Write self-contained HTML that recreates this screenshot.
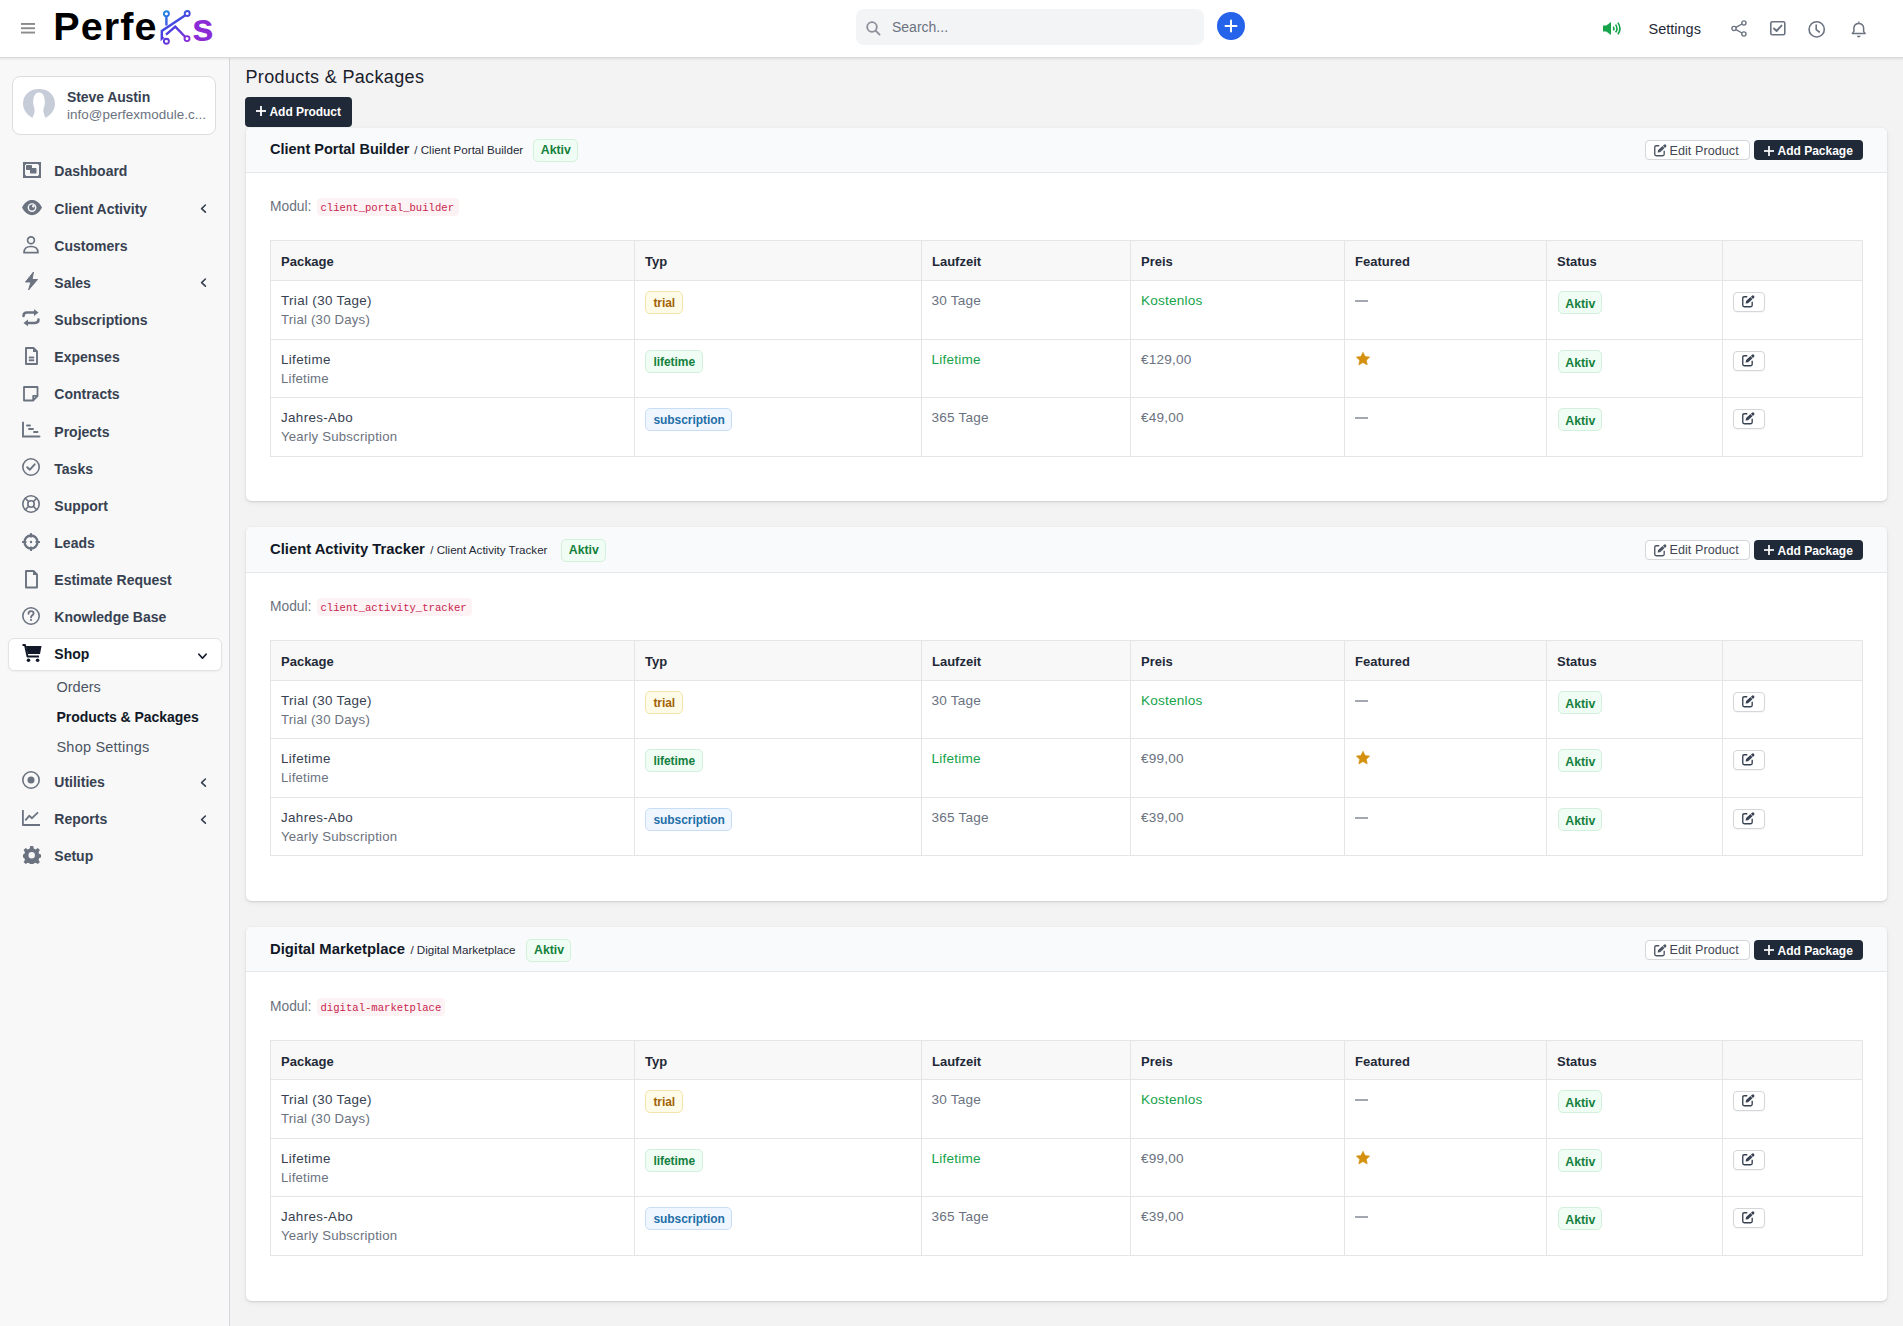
<!DOCTYPE html>
<html><head><meta charset="utf-8"><style>
*{box-sizing:border-box;margin:0;padding:0}
html,body{width:1903px;height:1326px;overflow:hidden}
body{font-family:"Liberation Sans",sans-serif;background:#f3f3f3;color:#374151;position:relative}
.abs{position:absolute}
.t{position:absolute;white-space:nowrap;line-height:1}
#hdr{position:absolute;left:0;top:0;width:1903px;height:58px;background:#fff;border-bottom:1px solid #dadada;z-index:5}
#hdrsh{position:absolute;left:0;top:58px;width:1903px;height:3px;background:linear-gradient(rgba(0,0,0,.07),rgba(0,0,0,0));z-index:4}
#side{position:absolute;left:0;top:58px;width:230px;height:1268px;background:#f8f8f8;border-right:1px solid #d6d6dc;z-index:3}
.card{position:absolute;left:246px;width:1641px;height:373.6px;background:#fff;border-radius:5px;box-shadow:0 1px 2px rgba(0,0,0,.11),0 2px 6px rgba(0,0,0,.05),0 0 1px rgba(0,0,0,.10)}
.ch{position:absolute;left:0;top:0;width:1641px;height:45.5px;background:#f9fafb;border-bottom:1px solid #e5e7eb;border-radius:5px 5px 0 0}
.badge{position:absolute;height:23px;border-radius:5px;border:1px solid}
.b-green{background:#f0fdf4;border-color:#d3f0dc}
.b-amber{background:#fefce8;border-color:#f3e4ad}
.b-blue{background:#eff6ff;border-color:#c9def5}
.hl{position:absolute;height:1px;background:#e5e5e8}
.vl{position:absolute;width:1px;background:#e5e5e8}
.btn{position:absolute;border-radius:4px}
</style></head><body>
<div id="hdr">
<svg class="abs" style="left:21px;top:22px;overflow:visible" width="14" height="12" viewBox="0 0 14 12" ><g fill="#8a8a8a"><rect x="0" y="1" width="14" height="1.9"/><rect x="0" y="5.3" width="14" height="1.9"/><rect x="0" y="9.6" width="14" height="1.9"/></g></svg>
<div class="t" style="left:53.3px;top:7.06px;font-size:39.5px;font-weight:bold;color:#000;letter-spacing:1.1px;">Perfe</div>
<svg class="abs" style="left:160px;top:10px;overflow:visible" width="32" height="35" viewBox="0 0 32 35" gradientUnits="userSpaceOnUse"><defs><linearGradient id="kg" gradientUnits="userSpaceOnUse" x1="4" y1="2" x2="26" y2="33"><stop offset="0" stop-color="#1e8ae6"/><stop offset=".45" stop-color="#4a3fe0"/><stop offset="1" stop-color="#8a2ad8"/></linearGradient></defs>
<g fill="none" stroke="url(#kg)" stroke-width="2.4" stroke-linecap="butt" stroke-linejoin="miter">
<circle cx="6.4" cy="3.7" r="2.5" stroke-width="1.9"/>
<line x1="6.4" y1="6.3" x2="6.4" y2="15.5"/>
<circle cx="27.2" cy="3.5" r="2.5" stroke-width="1.9"/>
<polyline points="25,5.5 1.8,21 1.8,28.5 3.5,27"/>
<polyline points="6,24.7 15.3,16.7 24.8,26.5"/>
<circle cx="27" cy="28.6" r="2.5" stroke-width="1.9"/>
<circle cx="6.4" cy="31.2" r="2.5" stroke-width="1.9"/>
</g></svg>
<div class="t" style="left:192px;top:7.79px;font-size:39px;font-weight:bold;color:#8b2bd6;letter-spacing:0px;">s</div>
<div class="abs" style="left:856px;top:9px;width:348px;height:36px;background:#f3f4f6;border-radius:8px"></div>
<svg class="abs" style="left:866px;top:21px;overflow:visible" width="15" height="15" viewBox="0 0 15 15" ><g fill="none" stroke="#8a8f98" stroke-width="1.8"><circle cx="6" cy="6" r="4.8"/><line x1="9.6" y1="9.6" x2="13.6" y2="13.6" stroke-linecap="round"/></g></svg>
<div class="t" style="left:892px;top:20.45px;font-size:14px;font-weight:normal;color:#6b7280;letter-spacing:0px;">Search...</div>
<svg class="abs" style="left:1217px;top:11.7px;overflow:visible" width="28" height="28" viewBox="0 0 28 28" ><circle cx="14" cy="14" r="14" fill="#2563eb"/><g stroke="#fff" stroke-width="2" stroke-linecap="round"><line x1="14" y1="8.5" x2="14" y2="19.5"/><line x1="8.5" y1="14" x2="19.5" y2="14"/></g></svg>
<svg class="abs" style="left:1603px;top:22px;overflow:visible" width="19" height="13" viewBox="0 0 19 13" ><path d="M0 3.6 H3.3 L8 0 V13 L3.3 9.4 H0 Z" fill="#16a34a"/><g fill="none" stroke="#16a34a" stroke-width="1.6"><path d="M10.3 4.6 Q11.7 6.5 10.3 8.4"/><path d="M12.6 2.6 Q15.4 6.5 12.6 10.4"/><path d="M14.9 0.6 Q19 6.5 14.9 12.4"/></g></svg>
<div class="t" style="left:1648.5px;top:21.73px;font-size:14.5px;font-weight:normal;color:#1f2937;letter-spacing:0px;">Settings</div>
<svg class="abs" style="left:1731px;top:20px;overflow:visible" width="16" height="17" viewBox="0 0 16 17" ><g fill="none" stroke="#6b7280" stroke-width="1.4"><circle cx="12.9" cy="3" r="2.1"/><circle cx="3" cy="8.5" r="2.1"/><circle cx="12.9" cy="14" r="2.1"/><line x1="4.9" y1="7.4" x2="11" y2="4"/><line x1="4.9" y1="9.6" x2="11" y2="13"/></g></svg>
<svg class="abs" style="left:1770px;top:21px;overflow:visible" width="16" height="15" viewBox="0 0 16 15" ><g fill="none" stroke="#6b7280" stroke-width="1.6"><rect x="0.8" y="0.8" width="14" height="13" rx="1.5"/><polyline points="4,7.5 6.6,10 11.5,4.6" stroke-width="1.9" stroke-linecap="round" stroke-linejoin="round"/></g></svg>
<svg class="abs" style="left:1808px;top:21px;overflow:visible" width="18" height="17" viewBox="0 0 18 17" ><g fill="none" stroke="#6b7280" stroke-width="1.6"><circle cx="8.7" cy="8.4" r="7.6"/><polyline points="8.2,4 8.2,8.7 11.3,11" stroke-linecap="round" stroke-linejoin="round"/></g></svg>
<svg class="abs" style="left:1851px;top:21px;overflow:visible" width="16" height="17" viewBox="0 0 16 17" ><g fill="none" stroke="#6b7280" stroke-width="1.5" stroke-linejoin="round"><path d="M1.3 12.6 H14.2 L12.6 10.4 V6.6 A4.9 4.9 0 0 0 2.9 6.6 V10.4 Z"/><line x1="7.75" y1="0.4" x2="7.75" y2="1.7"/></g><path d="M5.8 14.8 H9.7 Q9.5 16.4 7.75 16.4 Q6 16.4 5.8 14.8Z" fill="#6b7280"/></svg>
</div><div id="hdrsh"></div>
<div id="side">
<div class="abs" style="left:12px;top:18px;width:204px;height:58.5px;background:#fff;border:1px solid #dcdde0;border-radius:8px"></div>
<svg class="abs" style="left:23px;top:31px;overflow:visible" width="32" height="30" viewBox="0 0 32 30" ><path d="M9.5 29 C6 27 0 22 0 15 C0 6 6.5 0 16 0 C25.5 0 32 6 32 15 C32 22 26 27 22.5 29 C21 25 19.5 22 21 18 C22.5 14 22 8 19.5 5 C18 3 14 3 12.5 5 C10 8 9.5 14 11 18 C12.5 22 11 25 9.5 29Z" fill="#c7ccd9"/></svg>
<div class="t" style="left:67px;top:31.95px;font-size:14px;font-weight:bold;color:#374151;letter-spacing:-0.1px;">Steve Austin</div>
<div class="t" style="left:67px;top:50.46px;font-size:13.4px;font-weight:normal;color:#6b7280;letter-spacing:0.05px;">info@perfexmodule.c...</div>
<div class="abs" style="left:8px;top:579.5px;width:214px;height:33px;background:#fff;border:1px solid #e2e3e6;border-radius:6px;box-shadow:0 1px 2px rgba(0,0,0,.05)"></div>
<div class="t" style="left:54.3px;top:106.45px;font-size:14px;font-weight:bold;color:#374151;letter-spacing:0px;">Dashboard</div>
<svg class="abs" style="left:23px;top:104px;overflow:visible" width="18" height="16" viewBox="0 0 18 16" ><g fill="none" stroke="#6b7280" stroke-width="2"><rect x="1" y="1" width="16" height="14"/></g><g fill="#6b7280"><rect x="0" y="0" width="3" height="3" rx=".8"/><rect x="15" y="0" width="3" height="3" rx=".8"/><rect x="0" y="13" width="3" height="3" rx=".8"/><rect x="15" y="13" width="3" height="3" rx=".8"/><rect x="3" y="3" width="6" height="5" rx=".8"/><rect x="7" y="6" width="6.5" height="5.5" rx=".8"/></g></svg>
<div class="t" style="left:54.3px;top:143.60px;font-size:14px;font-weight:bold;color:#374151;letter-spacing:0px;">Client Activity</div>
<svg class="abs" style="left:22px;top:141.5px;overflow:visible" width="20" height="15.2" viewBox="0 0 20 15.2" ><path d="M0 7.6 C3 1.5 7 0 10 0 C13 0 17 1.5 20 7.6 C17 13.7 13 15.2 10 15.2 C7 15.2 3 13.7 0 7.6Z" fill="#6b7280"/><circle cx="10" cy="7.6" r="4.4" fill="#f8f8f8"/><circle cx="10" cy="7.6" r="3" fill="#6b7280"/><circle cx="11.3" cy="6.3" r="1.2" fill="#f8f8f8"/></svg>
<svg class="abs" style="left:200px;top:145.85px;overflow:visible" width="7" height="9" viewBox="0 0 7 9" ><polyline points="5.4,1 1.6,4.6 5.4,8.2" fill="none" stroke="#374151" stroke-width="1.6" stroke-linecap="round" stroke-linejoin="round"/></svg>
<div class="t" style="left:54.3px;top:180.75px;font-size:14px;font-weight:bold;color:#374151;letter-spacing:0px;">Customers</div>
<svg class="abs" style="left:23px;top:177.5px;overflow:visible" width="16" height="17.5" viewBox="0 0 16 17.5" ><g fill="none" stroke="#6b7280" stroke-width="1.7"><circle cx="8" cy="4.3" r="3.4"/><path d="M1 16.7 C1 12.5 4 10.5 8 10.5 C12 10.5 15 12.5 15 16.7 Z" stroke-linejoin="round"/></g></svg>
<div class="t" style="left:54.3px;top:217.90px;font-size:14px;font-weight:bold;color:#374151;letter-spacing:0px;">Sales</div>
<svg class="abs" style="left:24.3px;top:214px;overflow:visible" width="14" height="18" viewBox="0 0 14 18" ><path d="M9.5 0 L1.5 10 H7 L4.5 18 L13.5 7.5 H8 Z" fill="#6b7280" stroke="#6b7280" stroke-width="1" stroke-linejoin="round"/></svg>
<svg class="abs" style="left:200px;top:220.14999999999998px;overflow:visible" width="7" height="9" viewBox="0 0 7 9" ><polyline points="5.4,1 1.6,4.6 5.4,8.2" fill="none" stroke="#374151" stroke-width="1.6" stroke-linecap="round" stroke-linejoin="round"/></svg>
<div class="t" style="left:54.3px;top:255.05px;font-size:14px;font-weight:bold;color:#374151;letter-spacing:0px;">Subscriptions</div>
<svg class="abs" style="left:22px;top:251.3px;overflow:visible" width="18" height="17.5" viewBox="0 0 18 17.5" ><g fill="none" stroke="#6b7280" stroke-width="2.5" stroke-linecap="round"><path d="M1.5 7 C1.5 4.5 3 3.6 5 3.6 H13"/><path d="M16.5 10.5 C16.5 13 15 13.9 13 13.9 H5"/></g><path d="M12 0.3 L16.5 3.6 L12 6.9Z" fill="#6b7280"/><path d="M6 10.6 L1.5 13.9 L6 17.2Z" fill="#6b7280"/></svg>
<div class="t" style="left:54.3px;top:292.20px;font-size:14px;font-weight:bold;color:#374151;letter-spacing:0px;">Expenses</div>
<svg class="abs" style="left:24.3px;top:289px;overflow:visible" width="15" height="18" viewBox="0 0 15 18" ><g fill="none" stroke="#6b7280" stroke-width="1.9"><path d="M2 1 H9.5 L13 4.5 V17 H2 Z" stroke-linejoin="round"/><line x1="4.8" y1="10.5" x2="10.2" y2="10.5"/><line x1="4.8" y1="13.3" x2="10.2" y2="13.3"/></g><path d="M9 0.5 L13.5 5 H9Z" fill="#6b7280"/></svg>
<div class="t" style="left:54.3px;top:329.35px;font-size:14px;font-weight:bold;color:#374151;letter-spacing:0px;">Contracts</div>
<svg class="abs" style="left:23.3px;top:327.5px;overflow:visible" width="15.5" height="15.5" viewBox="0 0 15.5 15.5" ><g fill="none" stroke="#6b7280" stroke-width="1.8" stroke-linejoin="round"><path d="M1 1 H14.5 V10 L10 14.5 H1 Z"/><path d="M14.5 9.8 H10.2 V14.5"/></g></svg>
<div class="t" style="left:54.3px;top:366.50px;font-size:14px;font-weight:bold;color:#374151;letter-spacing:0px;">Projects</div>
<svg class="abs" style="left:22px;top:364.4px;overflow:visible" width="18.5" height="15.5" viewBox="0 0 18.5 15.5" ><g fill="none" stroke="#6b7280" stroke-width="1.9" stroke-linecap="round"><path d="M1 0.5 V14.5 H17.5"/><line x1="5" y1="3.5" x2="8" y2="3.5"/><line x1="7" y1="7" x2="11" y2="7"/><line x1="12" y1="10" x2="15.5" y2="10"/></g></svg>
<div class="t" style="left:54.3px;top:403.65px;font-size:14px;font-weight:bold;color:#374151;letter-spacing:0px;">Tasks</div>
<svg class="abs" style="left:22px;top:400px;overflow:visible" width="18" height="18" viewBox="0 0 18 18" ><g fill="none" stroke="#6b7280" stroke-width="1.6"><circle cx="9" cy="9" r="8.2"/><polyline points="5.2,9.2 7.9,11.7 12.7,6.3" stroke-width="1.9" stroke-linecap="round" stroke-linejoin="round"/></g></svg>
<div class="t" style="left:54.3px;top:440.80px;font-size:14px;font-weight:bold;color:#374151;letter-spacing:0px;">Support</div>
<svg class="abs" style="left:22px;top:436.8px;overflow:visible" width="18" height="18" viewBox="0 0 18 18" ><g fill="none" stroke="#6b7280" stroke-width="1.6"><circle cx="9" cy="9" r="8.2"/><circle cx="9" cy="9" r="3.2"/><line x1="2.9" y1="2.9" x2="6.7" y2="6.7"/><line x1="15.1" y1="2.9" x2="11.3" y2="6.7"/><line x1="2.9" y1="15.1" x2="6.7" y2="11.3"/><line x1="15.1" y1="15.1" x2="11.3" y2="11.3"/></g></svg>
<div class="t" style="left:54.3px;top:477.95px;font-size:14px;font-weight:bold;color:#374151;letter-spacing:0px;">Leads</div>
<svg class="abs" style="left:22px;top:475px;overflow:visible" width="18" height="18" viewBox="0 0 18 18" ><g fill="none" stroke="#6b7280" stroke-width="2.3"><circle cx="9" cy="9" r="6.5"/></g><g fill="#6b7280"><rect x="8" y="0" width="2" height="4.5" rx=".6"/><rect x="8" y="13.5" width="2" height="4.5" rx=".6"/><rect x="0" y="8" width="4.5" height="2" rx=".6"/><rect x="13.5" y="8" width="4.5" height="2" rx=".6"/><circle cx="9" cy="9" r="1.2"/></g></svg>
<div class="t" style="left:54.3px;top:515.10px;font-size:14px;font-weight:bold;color:#374151;letter-spacing:0px;">Estimate Request</div>
<svg class="abs" style="left:24.3px;top:511.70000000000005px;overflow:visible" width="15" height="18.5" viewBox="0 0 15 18.5" ><g fill="none" stroke="#6b7280" stroke-width="1.9" stroke-linejoin="round"><path d="M2 1 H9.5 L13 4.5 V17.5 H2 Z"/></g><path d="M9 0.5 L13.5 5 H9Z" fill="#6b7280"/></svg>
<div class="t" style="left:54.3px;top:552.25px;font-size:14px;font-weight:bold;color:#374151;letter-spacing:0px;">Knowledge Base</div>
<svg class="abs" style="left:22px;top:549.2px;overflow:visible" width="18" height="18" viewBox="0 0 18 18" ><g fill="none" stroke="#6b7280" stroke-width="1.6"><circle cx="9" cy="9" r="8.2"/><path d="M6.5 6.8 C6.5 5 7.6 4.2 9 4.2 C10.5 4.2 11.6 5.1 11.6 6.5 C11.6 8.3 9 8.4 9 10.4" stroke-width="1.8" stroke-linecap="round"/></g><circle cx="9" cy="13" r="1.1" fill="#6b7280"/></svg>
<div class="t" style="left:54.3px;top:589.40px;font-size:14px;font-weight:bold;color:#111827;letter-spacing:0px;">Shop</div>
<svg class="abs" style="left:22px;top:586px;overflow:visible" width="20" height="18.2" viewBox="0 0 20 18.2" ><path d="M0.5 1 H3 L5.5 12.5 H17" fill="none" stroke="#111827" stroke-width="1.9" stroke-linejoin="round"/><path d="M4 2 H19.5 L18 10 H5.7 Z" fill="#111827"/><circle cx="6.5" cy="16.3" r="1.8" fill="#111827"/><circle cx="15.6" cy="16.3" r="1.8" fill="#111827"/></svg>
<svg class="abs" style="left:198px;top:594.5px;overflow:visible" width="9" height="7" viewBox="0 0 9 7" ><polyline points="0.9,1.2 4.5,5.2 8.1,1.2" fill="none" stroke="#111827" stroke-width="1.7" stroke-linecap="round" stroke-linejoin="round"/></svg>
<div class="t" style="left:56.5px;top:621.73px;font-size:14.5px;font-weight:normal;color:#4b5563;letter-spacing:0px;">Orders</div>
<div class="t" style="left:56.5px;top:652.15px;font-size:14px;font-weight:bold;color:#111827;letter-spacing:-0.05px;">Products &amp; Packages</div>
<div class="t" style="left:56.5px;top:681.93px;font-size:14.5px;font-weight:normal;color:#4b5563;letter-spacing:0.2px;">Shop Settings</div>
<div class="t" style="left:54.3px;top:717.45px;font-size:14px;font-weight:bold;color:#374151;letter-spacing:0px;">Utilities</div>
<svg class="abs" style="left:22px;top:713.2px;overflow:visible" width="18" height="18" viewBox="0 0 18 18" ><g fill="none" stroke="#6b7280" stroke-width="1.6"><circle cx="9" cy="9" r="8.2"/></g><circle cx="9" cy="9" r="3.5" fill="#6b7280"/></svg>
<svg class="abs" style="left:200px;top:719.7px;overflow:visible" width="7" height="9" viewBox="0 0 7 9" ><polyline points="5.4,1 1.6,4.6 5.4,8.2" fill="none" stroke="#374151" stroke-width="1.6" stroke-linecap="round" stroke-linejoin="round"/></svg>
<div class="t" style="left:54.3px;top:754.45px;font-size:14px;font-weight:bold;color:#374151;letter-spacing:0px;">Reports</div>
<svg class="abs" style="left:22px;top:752.2px;overflow:visible" width="18" height="16" viewBox="0 0 18 16" ><g fill="none" stroke="#6b7280" stroke-width="1.8" stroke-linejoin="round"><path d="M0.9 0 V15 H18"/><polyline points="3.3,10.3 7.2,5.8 10,8.2 16,2.4" stroke-linecap="butt"/></g></svg>
<svg class="abs" style="left:200px;top:756.7px;overflow:visible" width="7" height="9" viewBox="0 0 7 9" ><polyline points="5.4,1 1.6,4.6 5.4,8.2" fill="none" stroke="#374151" stroke-width="1.6" stroke-linecap="round" stroke-linejoin="round"/></svg>
<div class="t" style="left:54.3px;top:791.45px;font-size:14px;font-weight:bold;color:#374151;letter-spacing:0px;">Setup</div>
<svg class="abs" style="left:22.5px;top:788.3px;overflow:visible" width="18" height="18" viewBox="0 0 18 18" ><path fill="#6b7280" fill-rule="evenodd" d="M7.2 0 H10.2 L10.8 2.6 L12.6 3.4 L14.8 2 L16.9 4.1 L15.5 6.3 L16.3 8.1 L18 8.6 V11.6 L16.3 12 L15.5 13.9 L16.9 16 L14.8 18.1 L12.6 16.7 L10.8 17.5 L10.2 18 H7.2 L6.7 17.5 L4.8 16.7 L2.7 18.1 L0.6 16 L2 13.9 L1.2 12 L0 11.6 V8.6 L1.2 8.1 L2 6.3 L0.6 4.1 L2.7 2 L4.8 3.4 L6.7 2.6 Z M8.7 6 A3.2 3.2 0 1 0 8.7 12.4 A3.2 3.2 0 1 0 8.7 6Z"/></svg>
</div>
<div class="t" style="left:245.5px;top:67.76px;font-size:18px;font-weight:normal;color:#1a202c;letter-spacing:0.35px;">Products &amp; Packages</div>
<div class="btn" style="left:245px;top:97px;width:107px;height:30px;background:#1f2937"></div>
<svg class="abs" style="left:256px;top:105.5px;overflow:visible" width="10" height="10" viewBox="0 0 10 10" ><g stroke="#fff" stroke-width="1.8"><line x1="5" y1="0" x2="5" y2="10"/><line x1="0" y1="5" x2="10" y2="5"/></g></svg>
<div class="t" style="left:269.5px;top:106.14px;font-size:12px;font-weight:bold;color:#fff;letter-spacing:-0.05px;">Add Product</div>
<div class="card" style="top:127.5px;height:373.8px"><div class="ch" style="height:45.50px"></div></div>
<div class="t" style="left:270px;top:141.93px;font-size:14.5px;font-weight:bold;color:#111827;letter-spacing:0px;">Client Portal Builder</div>
<div class="t" style="left:414.3px;top:144.48px;font-size:11.6px;font-weight:normal;color:#1f2937;letter-spacing:0px;">/ Client Portal Builder</div>
<div class="badge b-green" style="left:533.0px;top:138.60px;width:45px"></div>
<div class="t" style="left:540.8px;top:143.89px;font-size:12.3px;font-weight:bold;color:#15803d;letter-spacing:0px;">Aktiv</div>
<div class="btn" style="left:1644.5px;top:140.30px;width:105.5px;height:19.5px;background:#fff;border:1px solid #d4d6da"></div>
<svg class="abs" style="left:1653.6px;top:144.1px;overflow:visible" width="12.5" height="12.5" viewBox="0 0 13 13" ><path d="M5.5 1.8 H2.3 Q0.8 1.8 0.8 3.3 V10.7 Q0.8 12.2 2.3 12.2 H9.1 Q10.6 12.2 10.6 10.7 V6.9" fill="none" stroke="#4b5563" stroke-width="1.4"/><path d="M3.7 8.8 L4.31 6.18 L8.80 2.19 L10.86 4.51 L6.37 8.50 Z" fill="#4b5563"/><path d="M9.32 1.73 L11.38 4.05 L12.42 3.12 A1.55 1.55 0 0 0 10.36 0.80 Z" fill="#4b5563"/></svg>
<div class="t" style="left:1669.5px;top:144.53px;font-size:12.6px;font-weight:normal;color:#3f4652;letter-spacing:0.05px;">Edit Product</div>
<div class="btn" style="left:1754px;top:140.00px;width:109px;height:20px;background:#1f2937"></div>
<svg class="abs" style="left:1763.5px;top:145.5px;overflow:visible" width="10" height="10" viewBox="0 0 10 10" ><g stroke="#fff" stroke-width="1.7"><line x1="5" y1="0" x2="5" y2="10"/><line x1="0" y1="5" x2="10" y2="5"/></g></svg>
<div class="t" style="left:1777.5px;top:145.04px;font-size:12px;font-weight:bold;color:#fff;letter-spacing:0px;">Add Package</div>
<div class="t" style="left:270px;top:200.42px;font-size:13.8px;font-weight:normal;color:#6b7280;letter-spacing:0px;">Modul:</div>
<div class="abs" style="left:316.5px;top:198.10px;width:142.1px;height:17.6px;background:#fdf2f4;border-radius:4px"></div>
<div class="t" style="left:320.5px;top:202.78px;font-size:10.6px;font-weight:normal;color:#c7254e;letter-spacing:0px;font-family:'Liberation Mono',monospace;">client_portal_builder</div>
<div class="abs" style="left:270px;top:240px;width:1592px;height:40px;background:#f8f8f9"></div>
<div class="hl" style="left:270px;top:240px;width:1593px"></div>
<div class="hl" style="left:270px;top:280px;width:1593px"></div>
<div class="hl" style="left:270px;top:339px;width:1593px"></div>
<div class="hl" style="left:270px;top:397px;width:1593px"></div>
<div class="hl" style="left:270px;top:456px;width:1593px"></div>
<div class="vl" style="left:270px;top:240px;height:217px"></div>
<div class="vl" style="left:634px;top:240px;height:217px"></div>
<div class="vl" style="left:921px;top:240px;height:217px"></div>
<div class="vl" style="left:1130px;top:240px;height:217px"></div>
<div class="vl" style="left:1344px;top:240px;height:217px"></div>
<div class="vl" style="left:1546px;top:240px;height:217px"></div>
<div class="vl" style="left:1722px;top:240px;height:217px"></div>
<div class="vl" style="left:1862px;top:240px;height:217px"></div>
<div class="t" style="left:281px;top:254.80px;font-size:13px;font-weight:bold;color:#1f2937;letter-spacing:0px;">Package</div>
<div class="t" style="left:645px;top:254.80px;font-size:13px;font-weight:bold;color:#1f2937;letter-spacing:0px;">Typ</div>
<div class="t" style="left:932px;top:254.80px;font-size:13px;font-weight:bold;color:#1f2937;letter-spacing:0px;">Laufzeit</div>
<div class="t" style="left:1141px;top:254.80px;font-size:13px;font-weight:bold;color:#1f2937;letter-spacing:0px;">Preis</div>
<div class="t" style="left:1355px;top:254.80px;font-size:13px;font-weight:bold;color:#1f2937;letter-spacing:0px;">Featured</div>
<div class="t" style="left:1557px;top:254.80px;font-size:13px;font-weight:bold;color:#1f2937;letter-spacing:0px;">Status</div>
<div class="t" style="left:281px;top:294.16px;font-size:13.4px;font-weight:normal;color:#374151;letter-spacing:0.35px;">Trial (30 Tage)</div>
<div class="t" style="left:281px;top:313.23px;font-size:13.2px;font-weight:normal;color:#6b7280;letter-spacing:0.2px;">Trial (30 Days)</div>
<div class="badge b-amber" style="left:645px;top:291px;width:37.7px"></div>
<div class="t" style="left:653.4px;top:296.64px;font-size:12px;font-weight:bold;color:#a16207;letter-spacing:-0.05px;">trial</div>
<div class="t" style="left:931.5px;top:293.99px;font-size:13.6px;font-weight:normal;color:#6b7280;letter-spacing:0.2px;">30 Tage</div>
<div class="t" style="left:1141px;top:293.99px;font-size:13.6px;font-weight:normal;color:#16a34a;letter-spacing:0.2px;">Kostenlos</div>
<div class="abs" style="left:1355px;top:300px;width:13px;height:2px;background:#a3a8b0"></div>
<div class="badge b-green" style="left:1557.5px;top:291px;width:44.5px"></div>
<div class="t" style="left:1565.3px;top:297.59px;font-size:12.3px;font-weight:bold;color:#15803d;letter-spacing:0px;">Aktiv</div>
<div class="btn" style="left:1733px;top:292px;width:31.5px;height:20px;background:#fff;border:1px solid #d4d6da;box-shadow:0 1px 1px rgba(0,0,0,.04)"></div>
<svg class="abs" style="left:1742.2px;top:295.2px;overflow:visible" width="12.5" height="12.5" viewBox="0 0 13 13" ><path d="M5.5 1.8 H2.3 Q0.8 1.8 0.8 3.3 V10.7 Q0.8 12.2 2.3 12.2 H9.1 Q10.6 12.2 10.6 10.7 V6.9" fill="none" stroke="#374151" stroke-width="1.4"/><path d="M3.7 8.8 L4.31 6.18 L8.80 2.19 L10.86 4.51 L6.37 8.50 Z" fill="#374151"/><path d="M9.32 1.73 L11.38 4.05 L12.42 3.12 A1.55 1.55 0 0 0 10.36 0.80 Z" fill="#374151"/></svg>
<div class="t" style="left:281px;top:353.16px;font-size:13.4px;font-weight:normal;color:#374151;letter-spacing:0.35px;">Lifetime</div>
<div class="t" style="left:281px;top:372.23px;font-size:13.2px;font-weight:normal;color:#6b7280;letter-spacing:0.2px;">Lifetime</div>
<div class="badge b-green" style="left:645px;top:350px;width:57.5px"></div>
<div class="t" style="left:653.4px;top:355.64px;font-size:12px;font-weight:bold;color:#15803d;letter-spacing:-0.05px;">lifetime</div>
<div class="t" style="left:931.5px;top:352.99px;font-size:13.6px;font-weight:normal;color:#16a34a;letter-spacing:0.2px;">Lifetime</div>
<div class="t" style="left:1141px;top:352.99px;font-size:13.6px;font-weight:normal;color:#6b7280;letter-spacing:0.2px;">€129,00</div>
<svg class="abs" style="left:1355.5px;top:351.8px;overflow:visible" width="14" height="14" viewBox="0 0 14 14" ><path d="M7 0.3 L9.1 4.6 L13.7 5.1 L10.3 8.3 L11.2 12.9 L7 10.6 L2.8 12.9 L3.7 8.3 L0.3 5.1 L4.9 4.6 Z" fill="#d4900e" stroke="#d4900e" stroke-width=".6" stroke-linejoin="round"/></svg>
<div class="badge b-green" style="left:1557.5px;top:350px;width:44.5px"></div>
<div class="t" style="left:1565.3px;top:356.59px;font-size:12.3px;font-weight:bold;color:#15803d;letter-spacing:0px;">Aktiv</div>
<div class="btn" style="left:1733px;top:351px;width:31.5px;height:20px;background:#fff;border:1px solid #d4d6da;box-shadow:0 1px 1px rgba(0,0,0,.04)"></div>
<svg class="abs" style="left:1742.2px;top:354.2px;overflow:visible" width="12.5" height="12.5" viewBox="0 0 13 13" ><path d="M5.5 1.8 H2.3 Q0.8 1.8 0.8 3.3 V10.7 Q0.8 12.2 2.3 12.2 H9.1 Q10.6 12.2 10.6 10.7 V6.9" fill="none" stroke="#374151" stroke-width="1.4"/><path d="M3.7 8.8 L4.31 6.18 L8.80 2.19 L10.86 4.51 L6.37 8.50 Z" fill="#374151"/><path d="M9.32 1.73 L11.38 4.05 L12.42 3.12 A1.55 1.55 0 0 0 10.36 0.80 Z" fill="#374151"/></svg>
<div class="t" style="left:281px;top:411.16px;font-size:13.4px;font-weight:normal;color:#374151;letter-spacing:0.35px;">Jahres-Abo</div>
<div class="t" style="left:281px;top:430.23px;font-size:13.2px;font-weight:normal;color:#6b7280;letter-spacing:0.2px;">Yearly Subscription</div>
<div class="badge b-blue" style="left:645px;top:408px;width:86.5px"></div>
<div class="t" style="left:653.4px;top:413.64px;font-size:12px;font-weight:bold;color:#1f6fa8;letter-spacing:-0.05px;">subscription</div>
<div class="t" style="left:931.5px;top:410.99px;font-size:13.6px;font-weight:normal;color:#6b7280;letter-spacing:0.2px;">365 Tage</div>
<div class="t" style="left:1141px;top:410.99px;font-size:13.6px;font-weight:normal;color:#6b7280;letter-spacing:0.2px;">€49,00</div>
<div class="abs" style="left:1355px;top:417px;width:13px;height:2px;background:#a3a8b0"></div>
<div class="badge b-green" style="left:1557.5px;top:408px;width:44.5px"></div>
<div class="t" style="left:1565.3px;top:414.59px;font-size:12.3px;font-weight:bold;color:#15803d;letter-spacing:0px;">Aktiv</div>
<div class="btn" style="left:1733px;top:409px;width:31.5px;height:20px;background:#fff;border:1px solid #d4d6da;box-shadow:0 1px 1px rgba(0,0,0,.04)"></div>
<svg class="abs" style="left:1742.2px;top:412.2px;overflow:visible" width="12.5" height="12.5" viewBox="0 0 13 13" ><path d="M5.5 1.8 H2.3 Q0.8 1.8 0.8 3.3 V10.7 Q0.8 12.2 2.3 12.2 H9.1 Q10.6 12.2 10.6 10.7 V6.9" fill="none" stroke="#374151" stroke-width="1.4"/><path d="M3.7 8.8 L4.31 6.18 L8.80 2.19 L10.86 4.51 L6.37 8.50 Z" fill="#374151"/><path d="M9.32 1.73 L11.38 4.05 L12.42 3.12 A1.55 1.55 0 0 0 10.36 0.80 Z" fill="#374151"/></svg>
<div class="card" style="top:527.4px;height:373.2px"><div class="ch" style="height:45.60px"></div></div>
<div class="t" style="left:270px;top:541.57px;font-size:14.8px;font-weight:bold;color:#111827;letter-spacing:0px;">Client Activity Tracker</div>
<div class="t" style="left:430.2px;top:544.38px;font-size:11.6px;font-weight:normal;color:#1f2937;letter-spacing:0px;">/ Client Activity Tracker</div>
<div class="badge b-green" style="left:561.0px;top:538.50px;width:45px"></div>
<div class="t" style="left:568.8px;top:543.79px;font-size:12.3px;font-weight:bold;color:#15803d;letter-spacing:0px;">Aktiv</div>
<div class="btn" style="left:1644.5px;top:540.20px;width:105.5px;height:19.5px;background:#fff;border:1px solid #d4d6da"></div>
<svg class="abs" style="left:1653.6px;top:544.0px;overflow:visible" width="12.5" height="12.5" viewBox="0 0 13 13" ><path d="M5.5 1.8 H2.3 Q0.8 1.8 0.8 3.3 V10.7 Q0.8 12.2 2.3 12.2 H9.1 Q10.6 12.2 10.6 10.7 V6.9" fill="none" stroke="#4b5563" stroke-width="1.4"/><path d="M3.7 8.8 L4.31 6.18 L8.80 2.19 L10.86 4.51 L6.37 8.50 Z" fill="#4b5563"/><path d="M9.32 1.73 L11.38 4.05 L12.42 3.12 A1.55 1.55 0 0 0 10.36 0.80 Z" fill="#4b5563"/></svg>
<div class="t" style="left:1669.5px;top:544.43px;font-size:12.6px;font-weight:normal;color:#3f4652;letter-spacing:0.05px;">Edit Product</div>
<div class="btn" style="left:1754px;top:539.90px;width:109px;height:20px;background:#1f2937"></div>
<svg class="abs" style="left:1763.5px;top:545.4px;overflow:visible" width="10" height="10" viewBox="0 0 10 10" ><g stroke="#fff" stroke-width="1.7"><line x1="5" y1="0" x2="5" y2="10"/><line x1="0" y1="5" x2="10" y2="5"/></g></svg>
<div class="t" style="left:1777.5px;top:544.94px;font-size:12px;font-weight:bold;color:#fff;letter-spacing:0px;">Add Package</div>
<div class="t" style="left:270px;top:600.32px;font-size:13.8px;font-weight:normal;color:#6b7280;letter-spacing:0px;">Modul:</div>
<div class="abs" style="left:316.5px;top:598.00px;width:155.2px;height:17.6px;background:#fdf2f4;border-radius:4px"></div>
<div class="t" style="left:320.5px;top:602.68px;font-size:10.6px;font-weight:normal;color:#c7254e;letter-spacing:0px;font-family:'Liberation Mono',monospace;">client_activity_tracker</div>
<div class="abs" style="left:270px;top:640px;width:1592px;height:40px;background:#f8f8f9"></div>
<div class="hl" style="left:270px;top:640px;width:1593px"></div>
<div class="hl" style="left:270px;top:680px;width:1593px"></div>
<div class="hl" style="left:270px;top:738px;width:1593px"></div>
<div class="hl" style="left:270px;top:797px;width:1593px"></div>
<div class="hl" style="left:270px;top:855px;width:1593px"></div>
<div class="vl" style="left:270px;top:640px;height:216px"></div>
<div class="vl" style="left:634px;top:640px;height:216px"></div>
<div class="vl" style="left:921px;top:640px;height:216px"></div>
<div class="vl" style="left:1130px;top:640px;height:216px"></div>
<div class="vl" style="left:1344px;top:640px;height:216px"></div>
<div class="vl" style="left:1546px;top:640px;height:216px"></div>
<div class="vl" style="left:1722px;top:640px;height:216px"></div>
<div class="vl" style="left:1862px;top:640px;height:216px"></div>
<div class="t" style="left:281px;top:654.80px;font-size:13px;font-weight:bold;color:#1f2937;letter-spacing:0px;">Package</div>
<div class="t" style="left:645px;top:654.80px;font-size:13px;font-weight:bold;color:#1f2937;letter-spacing:0px;">Typ</div>
<div class="t" style="left:932px;top:654.80px;font-size:13px;font-weight:bold;color:#1f2937;letter-spacing:0px;">Laufzeit</div>
<div class="t" style="left:1141px;top:654.80px;font-size:13px;font-weight:bold;color:#1f2937;letter-spacing:0px;">Preis</div>
<div class="t" style="left:1355px;top:654.80px;font-size:13px;font-weight:bold;color:#1f2937;letter-spacing:0px;">Featured</div>
<div class="t" style="left:1557px;top:654.80px;font-size:13px;font-weight:bold;color:#1f2937;letter-spacing:0px;">Status</div>
<div class="t" style="left:281px;top:694.16px;font-size:13.4px;font-weight:normal;color:#374151;letter-spacing:0.35px;">Trial (30 Tage)</div>
<div class="t" style="left:281px;top:713.23px;font-size:13.2px;font-weight:normal;color:#6b7280;letter-spacing:0.2px;">Trial (30 Days)</div>
<div class="badge b-amber" style="left:645px;top:691px;width:37.7px"></div>
<div class="t" style="left:653.4px;top:696.64px;font-size:12px;font-weight:bold;color:#a16207;letter-spacing:-0.05px;">trial</div>
<div class="t" style="left:931.5px;top:693.99px;font-size:13.6px;font-weight:normal;color:#6b7280;letter-spacing:0.2px;">30 Tage</div>
<div class="t" style="left:1141px;top:693.99px;font-size:13.6px;font-weight:normal;color:#16a34a;letter-spacing:0.2px;">Kostenlos</div>
<div class="abs" style="left:1355px;top:700px;width:13px;height:2px;background:#a3a8b0"></div>
<div class="badge b-green" style="left:1557.5px;top:691px;width:44.5px"></div>
<div class="t" style="left:1565.3px;top:697.59px;font-size:12.3px;font-weight:bold;color:#15803d;letter-spacing:0px;">Aktiv</div>
<div class="btn" style="left:1733px;top:692px;width:31.5px;height:20px;background:#fff;border:1px solid #d4d6da;box-shadow:0 1px 1px rgba(0,0,0,.04)"></div>
<svg class="abs" style="left:1742.2px;top:695.2px;overflow:visible" width="12.5" height="12.5" viewBox="0 0 13 13" ><path d="M5.5 1.8 H2.3 Q0.8 1.8 0.8 3.3 V10.7 Q0.8 12.2 2.3 12.2 H9.1 Q10.6 12.2 10.6 10.7 V6.9" fill="none" stroke="#374151" stroke-width="1.4"/><path d="M3.7 8.8 L4.31 6.18 L8.80 2.19 L10.86 4.51 L6.37 8.50 Z" fill="#374151"/><path d="M9.32 1.73 L11.38 4.05 L12.42 3.12 A1.55 1.55 0 0 0 10.36 0.80 Z" fill="#374151"/></svg>
<div class="t" style="left:281px;top:752.16px;font-size:13.4px;font-weight:normal;color:#374151;letter-spacing:0.35px;">Lifetime</div>
<div class="t" style="left:281px;top:771.23px;font-size:13.2px;font-weight:normal;color:#6b7280;letter-spacing:0.2px;">Lifetime</div>
<div class="badge b-green" style="left:645px;top:749px;width:57.5px"></div>
<div class="t" style="left:653.4px;top:754.64px;font-size:12px;font-weight:bold;color:#15803d;letter-spacing:-0.05px;">lifetime</div>
<div class="t" style="left:931.5px;top:751.99px;font-size:13.6px;font-weight:normal;color:#16a34a;letter-spacing:0.2px;">Lifetime</div>
<div class="t" style="left:1141px;top:751.99px;font-size:13.6px;font-weight:normal;color:#6b7280;letter-spacing:0.2px;">€99,00</div>
<svg class="abs" style="left:1355.5px;top:750.8px;overflow:visible" width="14" height="14" viewBox="0 0 14 14" ><path d="M7 0.3 L9.1 4.6 L13.7 5.1 L10.3 8.3 L11.2 12.9 L7 10.6 L2.8 12.9 L3.7 8.3 L0.3 5.1 L4.9 4.6 Z" fill="#d4900e" stroke="#d4900e" stroke-width=".6" stroke-linejoin="round"/></svg>
<div class="badge b-green" style="left:1557.5px;top:749px;width:44.5px"></div>
<div class="t" style="left:1565.3px;top:755.59px;font-size:12.3px;font-weight:bold;color:#15803d;letter-spacing:0px;">Aktiv</div>
<div class="btn" style="left:1733px;top:750px;width:31.5px;height:20px;background:#fff;border:1px solid #d4d6da;box-shadow:0 1px 1px rgba(0,0,0,.04)"></div>
<svg class="abs" style="left:1742.2px;top:753.2px;overflow:visible" width="12.5" height="12.5" viewBox="0 0 13 13" ><path d="M5.5 1.8 H2.3 Q0.8 1.8 0.8 3.3 V10.7 Q0.8 12.2 2.3 12.2 H9.1 Q10.6 12.2 10.6 10.7 V6.9" fill="none" stroke="#374151" stroke-width="1.4"/><path d="M3.7 8.8 L4.31 6.18 L8.80 2.19 L10.86 4.51 L6.37 8.50 Z" fill="#374151"/><path d="M9.32 1.73 L11.38 4.05 L12.42 3.12 A1.55 1.55 0 0 0 10.36 0.80 Z" fill="#374151"/></svg>
<div class="t" style="left:281px;top:811.16px;font-size:13.4px;font-weight:normal;color:#374151;letter-spacing:0.35px;">Jahres-Abo</div>
<div class="t" style="left:281px;top:830.23px;font-size:13.2px;font-weight:normal;color:#6b7280;letter-spacing:0.2px;">Yearly Subscription</div>
<div class="badge b-blue" style="left:645px;top:808px;width:86.5px"></div>
<div class="t" style="left:653.4px;top:813.64px;font-size:12px;font-weight:bold;color:#1f6fa8;letter-spacing:-0.05px;">subscription</div>
<div class="t" style="left:931.5px;top:810.99px;font-size:13.6px;font-weight:normal;color:#6b7280;letter-spacing:0.2px;">365 Tage</div>
<div class="t" style="left:1141px;top:810.99px;font-size:13.6px;font-weight:normal;color:#6b7280;letter-spacing:0.2px;">€39,00</div>
<div class="abs" style="left:1355px;top:817px;width:13px;height:2px;background:#a3a8b0"></div>
<div class="badge b-green" style="left:1557.5px;top:808px;width:44.5px"></div>
<div class="t" style="left:1565.3px;top:814.59px;font-size:12.3px;font-weight:bold;color:#15803d;letter-spacing:0px;">Aktiv</div>
<div class="btn" style="left:1733px;top:809px;width:31.5px;height:20px;background:#fff;border:1px solid #d4d6da;box-shadow:0 1px 1px rgba(0,0,0,.04)"></div>
<svg class="abs" style="left:1742.2px;top:812.2px;overflow:visible" width="12.5" height="12.5" viewBox="0 0 13 13" ><path d="M5.5 1.8 H2.3 Q0.8 1.8 0.8 3.3 V10.7 Q0.8 12.2 2.3 12.2 H9.1 Q10.6 12.2 10.6 10.7 V6.9" fill="none" stroke="#374151" stroke-width="1.4"/><path d="M3.7 8.8 L4.31 6.18 L8.80 2.19 L10.86 4.51 L6.37 8.50 Z" fill="#374151"/><path d="M9.32 1.73 L11.38 4.05 L12.42 3.12 A1.55 1.55 0 0 0 10.36 0.80 Z" fill="#374151"/></svg>
<div class="card" style="top:926.7px;height:374.0px"><div class="ch" style="height:45.30px"></div></div>
<div class="t" style="left:270px;top:941.57px;font-size:14.8px;font-weight:bold;color:#111827;letter-spacing:0px;">Digital Marketplace</div>
<div class="t" style="left:410.4px;top:944.38px;font-size:11.6px;font-weight:normal;color:#1f2937;letter-spacing:0px;">/ Digital Marketplace</div>
<div class="badge b-green" style="left:526.2px;top:938.50px;width:45px"></div>
<div class="t" style="left:534.0px;top:943.79px;font-size:12.3px;font-weight:bold;color:#15803d;letter-spacing:0px;">Aktiv</div>
<div class="btn" style="left:1644.5px;top:940.20px;width:105.5px;height:19.5px;background:#fff;border:1px solid #d4d6da"></div>
<svg class="abs" style="left:1653.6px;top:944.0000000000001px;overflow:visible" width="12.5" height="12.5" viewBox="0 0 13 13" ><path d="M5.5 1.8 H2.3 Q0.8 1.8 0.8 3.3 V10.7 Q0.8 12.2 2.3 12.2 H9.1 Q10.6 12.2 10.6 10.7 V6.9" fill="none" stroke="#4b5563" stroke-width="1.4"/><path d="M3.7 8.8 L4.31 6.18 L8.80 2.19 L10.86 4.51 L6.37 8.50 Z" fill="#4b5563"/><path d="M9.32 1.73 L11.38 4.05 L12.42 3.12 A1.55 1.55 0 0 0 10.36 0.80 Z" fill="#4b5563"/></svg>
<div class="t" style="left:1669.5px;top:944.43px;font-size:12.6px;font-weight:normal;color:#3f4652;letter-spacing:0.05px;">Edit Product</div>
<div class="btn" style="left:1754px;top:939.90px;width:109px;height:20px;background:#1f2937"></div>
<svg class="abs" style="left:1763.5px;top:945.4000000000001px;overflow:visible" width="10" height="10" viewBox="0 0 10 10" ><g stroke="#fff" stroke-width="1.7"><line x1="5" y1="0" x2="5" y2="10"/><line x1="0" y1="5" x2="10" y2="5"/></g></svg>
<div class="t" style="left:1777.5px;top:944.94px;font-size:12px;font-weight:bold;color:#fff;letter-spacing:0px;">Add Package</div>
<div class="t" style="left:270px;top:1000.32px;font-size:13.8px;font-weight:normal;color:#6b7280;letter-spacing:0px;">Modul:</div>
<div class="abs" style="left:316.5px;top:998.00px;width:128.7px;height:17.6px;background:#fdf2f4;border-radius:4px"></div>
<div class="t" style="left:320.5px;top:1002.68px;font-size:10.6px;font-weight:normal;color:#c7254e;letter-spacing:0px;font-family:'Liberation Mono',monospace;">digital-marketplace</div>
<div class="abs" style="left:270px;top:1040px;width:1592px;height:39px;background:#f8f8f9"></div>
<div class="hl" style="left:270px;top:1040px;width:1593px"></div>
<div class="hl" style="left:270px;top:1079px;width:1593px"></div>
<div class="hl" style="left:270px;top:1138px;width:1593px"></div>
<div class="hl" style="left:270px;top:1196px;width:1593px"></div>
<div class="hl" style="left:270px;top:1255px;width:1593px"></div>
<div class="vl" style="left:270px;top:1040px;height:216px"></div>
<div class="vl" style="left:634px;top:1040px;height:216px"></div>
<div class="vl" style="left:921px;top:1040px;height:216px"></div>
<div class="vl" style="left:1130px;top:1040px;height:216px"></div>
<div class="vl" style="left:1344px;top:1040px;height:216px"></div>
<div class="vl" style="left:1546px;top:1040px;height:216px"></div>
<div class="vl" style="left:1722px;top:1040px;height:216px"></div>
<div class="vl" style="left:1862px;top:1040px;height:216px"></div>
<div class="t" style="left:281px;top:1054.80px;font-size:13px;font-weight:bold;color:#1f2937;letter-spacing:0px;">Package</div>
<div class="t" style="left:645px;top:1054.80px;font-size:13px;font-weight:bold;color:#1f2937;letter-spacing:0px;">Typ</div>
<div class="t" style="left:932px;top:1054.80px;font-size:13px;font-weight:bold;color:#1f2937;letter-spacing:0px;">Laufzeit</div>
<div class="t" style="left:1141px;top:1054.80px;font-size:13px;font-weight:bold;color:#1f2937;letter-spacing:0px;">Preis</div>
<div class="t" style="left:1355px;top:1054.80px;font-size:13px;font-weight:bold;color:#1f2937;letter-spacing:0px;">Featured</div>
<div class="t" style="left:1557px;top:1054.80px;font-size:13px;font-weight:bold;color:#1f2937;letter-spacing:0px;">Status</div>
<div class="t" style="left:281px;top:1093.16px;font-size:13.4px;font-weight:normal;color:#374151;letter-spacing:0.35px;">Trial (30 Tage)</div>
<div class="t" style="left:281px;top:1112.23px;font-size:13.2px;font-weight:normal;color:#6b7280;letter-spacing:0.2px;">Trial (30 Days)</div>
<div class="badge b-amber" style="left:645px;top:1090px;width:37.7px"></div>
<div class="t" style="left:653.4px;top:1095.64px;font-size:12px;font-weight:bold;color:#a16207;letter-spacing:-0.05px;">trial</div>
<div class="t" style="left:931.5px;top:1092.99px;font-size:13.6px;font-weight:normal;color:#6b7280;letter-spacing:0.2px;">30 Tage</div>
<div class="t" style="left:1141px;top:1092.99px;font-size:13.6px;font-weight:normal;color:#16a34a;letter-spacing:0.2px;">Kostenlos</div>
<div class="abs" style="left:1355px;top:1099px;width:13px;height:2px;background:#a3a8b0"></div>
<div class="badge b-green" style="left:1557.5px;top:1090px;width:44.5px"></div>
<div class="t" style="left:1565.3px;top:1096.59px;font-size:12.3px;font-weight:bold;color:#15803d;letter-spacing:0px;">Aktiv</div>
<div class="btn" style="left:1733px;top:1091px;width:31.5px;height:20px;background:#fff;border:1px solid #d4d6da;box-shadow:0 1px 1px rgba(0,0,0,.04)"></div>
<svg class="abs" style="left:1742.2px;top:1094.2px;overflow:visible" width="12.5" height="12.5" viewBox="0 0 13 13" ><path d="M5.5 1.8 H2.3 Q0.8 1.8 0.8 3.3 V10.7 Q0.8 12.2 2.3 12.2 H9.1 Q10.6 12.2 10.6 10.7 V6.9" fill="none" stroke="#374151" stroke-width="1.4"/><path d="M3.7 8.8 L4.31 6.18 L8.80 2.19 L10.86 4.51 L6.37 8.50 Z" fill="#374151"/><path d="M9.32 1.73 L11.38 4.05 L12.42 3.12 A1.55 1.55 0 0 0 10.36 0.80 Z" fill="#374151"/></svg>
<div class="t" style="left:281px;top:1152.16px;font-size:13.4px;font-weight:normal;color:#374151;letter-spacing:0.35px;">Lifetime</div>
<div class="t" style="left:281px;top:1171.23px;font-size:13.2px;font-weight:normal;color:#6b7280;letter-spacing:0.2px;">Lifetime</div>
<div class="badge b-green" style="left:645px;top:1149px;width:57.5px"></div>
<div class="t" style="left:653.4px;top:1154.64px;font-size:12px;font-weight:bold;color:#15803d;letter-spacing:-0.05px;">lifetime</div>
<div class="t" style="left:931.5px;top:1151.99px;font-size:13.6px;font-weight:normal;color:#16a34a;letter-spacing:0.2px;">Lifetime</div>
<div class="t" style="left:1141px;top:1151.99px;font-size:13.6px;font-weight:normal;color:#6b7280;letter-spacing:0.2px;">€99,00</div>
<svg class="abs" style="left:1355.5px;top:1150.8px;overflow:visible" width="14" height="14" viewBox="0 0 14 14" ><path d="M7 0.3 L9.1 4.6 L13.7 5.1 L10.3 8.3 L11.2 12.9 L7 10.6 L2.8 12.9 L3.7 8.3 L0.3 5.1 L4.9 4.6 Z" fill="#d4900e" stroke="#d4900e" stroke-width=".6" stroke-linejoin="round"/></svg>
<div class="badge b-green" style="left:1557.5px;top:1149px;width:44.5px"></div>
<div class="t" style="left:1565.3px;top:1155.59px;font-size:12.3px;font-weight:bold;color:#15803d;letter-spacing:0px;">Aktiv</div>
<div class="btn" style="left:1733px;top:1150px;width:31.5px;height:20px;background:#fff;border:1px solid #d4d6da;box-shadow:0 1px 1px rgba(0,0,0,.04)"></div>
<svg class="abs" style="left:1742.2px;top:1153.2px;overflow:visible" width="12.5" height="12.5" viewBox="0 0 13 13" ><path d="M5.5 1.8 H2.3 Q0.8 1.8 0.8 3.3 V10.7 Q0.8 12.2 2.3 12.2 H9.1 Q10.6 12.2 10.6 10.7 V6.9" fill="none" stroke="#374151" stroke-width="1.4"/><path d="M3.7 8.8 L4.31 6.18 L8.80 2.19 L10.86 4.51 L6.37 8.50 Z" fill="#374151"/><path d="M9.32 1.73 L11.38 4.05 L12.42 3.12 A1.55 1.55 0 0 0 10.36 0.80 Z" fill="#374151"/></svg>
<div class="t" style="left:281px;top:1210.16px;font-size:13.4px;font-weight:normal;color:#374151;letter-spacing:0.35px;">Jahres-Abo</div>
<div class="t" style="left:281px;top:1229.23px;font-size:13.2px;font-weight:normal;color:#6b7280;letter-spacing:0.2px;">Yearly Subscription</div>
<div class="badge b-blue" style="left:645px;top:1207px;width:86.5px"></div>
<div class="t" style="left:653.4px;top:1212.64px;font-size:12px;font-weight:bold;color:#1f6fa8;letter-spacing:-0.05px;">subscription</div>
<div class="t" style="left:931.5px;top:1209.99px;font-size:13.6px;font-weight:normal;color:#6b7280;letter-spacing:0.2px;">365 Tage</div>
<div class="t" style="left:1141px;top:1209.99px;font-size:13.6px;font-weight:normal;color:#6b7280;letter-spacing:0.2px;">€39,00</div>
<div class="abs" style="left:1355px;top:1216px;width:13px;height:2px;background:#a3a8b0"></div>
<div class="badge b-green" style="left:1557.5px;top:1207px;width:44.5px"></div>
<div class="t" style="left:1565.3px;top:1213.59px;font-size:12.3px;font-weight:bold;color:#15803d;letter-spacing:0px;">Aktiv</div>
<div class="btn" style="left:1733px;top:1208px;width:31.5px;height:20px;background:#fff;border:1px solid #d4d6da;box-shadow:0 1px 1px rgba(0,0,0,.04)"></div>
<svg class="abs" style="left:1742.2px;top:1211.2px;overflow:visible" width="12.5" height="12.5" viewBox="0 0 13 13" ><path d="M5.5 1.8 H2.3 Q0.8 1.8 0.8 3.3 V10.7 Q0.8 12.2 2.3 12.2 H9.1 Q10.6 12.2 10.6 10.7 V6.9" fill="none" stroke="#374151" stroke-width="1.4"/><path d="M3.7 8.8 L4.31 6.18 L8.80 2.19 L10.86 4.51 L6.37 8.50 Z" fill="#374151"/><path d="M9.32 1.73 L11.38 4.05 L12.42 3.12 A1.55 1.55 0 0 0 10.36 0.80 Z" fill="#374151"/></svg>
</body></html>
